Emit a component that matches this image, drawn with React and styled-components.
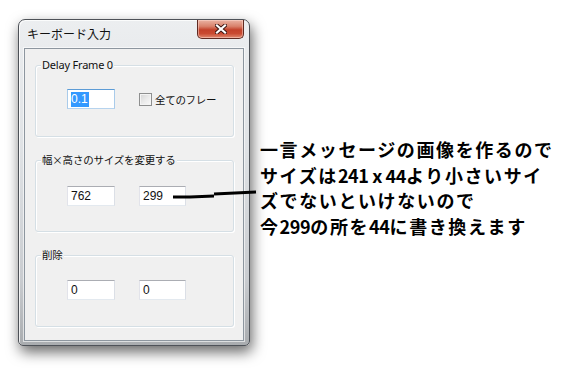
import React from "react";
import styled, { createGlobalStyle } from "styled-components";

const GlobalStyle = createGlobalStyle`
  html, body { margin: 0; padding: 0; background: #ffffff; }
  * { box-sizing: border-box; }
`;

const Page = styled.div`
  position: relative;
  width: 564px;
  height: 371px;
  display: flex;
  align-items: flex-start;
  padding: 19px 0 0 18px;
  background: #ffffff;
  overflow: hidden;
`;

const Window = styled.div`
  width: 232px;
  height: 327px;
  flex: none;
  display: flex;
  flex-direction: column;
  padding: 0 5px 4px 5px;
  border: 1px solid #4e5258;
  border-radius: 7px 7px 5px 5px;
  background: linear-gradient(180deg, #eceef0 0%, #dfe2e5 40%, #c9ccd0 80%, #a9acaf 100%);
  box-shadow: 2px 6px 14px rgba(0, 0, 0, 0.6), inset 1px 1px 0 rgba(255, 255, 255, 0.8);
`;

const TitleBar = styled.div`
  height: 28px;
  display: flex;
  justify-content: space-between;
  align-items: flex-start;
`;

const Title = styled.span`
  margin: 6px 0 0 3px;
  font-family: "Noto Sans CJK JP", sans-serif;
  font-size: 12px;
  line-height: 16px;
  color: #111;
`;

const CloseButton = styled.div`
  width: 47px;
  height: 19px;
  display: flex;
  align-items: center;
  justify-content: center;
  border: 1px solid #5f2a22;
  border-top: none;
  border-radius: 0 0 5px 5px;
  background: linear-gradient(180deg, #eab3a3 0%, #d9826c 35%, #c3412a 55%, #c94a31 75%, #e0896f 100%);
  box-shadow: inset 0 0 0 1px rgba(255, 220, 210, 0.5);
`;

const Client = styled.div`
  height: 293px;
  display: flex;
  flex-direction: column;
  gap: 23px;
  padding: 16px 9px 13px 10px;
  background: #f0f0f0;
  border: 1px solid #8d969f;
  box-shadow: 0 0 0 1px rgba(255, 255, 255, 0.6);
`;

const Group = styled.div`
  position: relative;
  height: 72px;
  flex: none;
  display: flex;
  align-self: stretch;
  align-items: flex-start;
  gap: 24px;
  padding: ${(p) => p.$top}px 0 0 31px;
  border: 1px solid #d5dfe5;
  border-radius: 3px;
  box-shadow: inset 1px 1px 0 #ffffff, 1px 1px 0 #ffffff;
`;

const GroupLabel = styled.span`
  position: absolute;
  left: 5px;
  top: -9px;
  padding: 0 1px;
  background: #f0f0f0;
  font-family: ${(p) => (p.$latin ? '"Noto Sans", sans-serif' : '"Noto Sans CJK JP", sans-serif')};
  font-size: ${(p) => (p.$latin ? "11px" : "10.5px")};
  letter-spacing: ${(p) => (p.$latin ? "-0.2px" : "-0.2px")};
  line-height: 16px;
  color: #111;
  white-space: nowrap;
`;

const TextBox = styled.div`
  width: ${(p) => p.$w || 48}px;
  height: 20px;
  flex: none;
  display: flex;
  align-items: center;
  padding-left: 3px;
  background: #ffffff;
  border: 1px solid;
  border-color: ${(p) =>
    p.$focused ? "#5d9cd6 #a9cbea #b6d3ee #a9cbea" : "#abadb3 #dbdfe6 #e3e9ef #e2e3ea"};
  font-family: "Liberation Sans", "Noto Sans", sans-serif;
  font-size: 12px;
  color: #111;
`;

const Selected = styled.span`
  background: #3399ff;
  color: #ffffff;
  line-height: 15px;
  padding: 0 1px 0 0;
`;

const CheckRow = styled.div`
  display: flex;
  align-items: center;
  gap: 3px;
  height: 20px;
  font-family: "Noto Sans CJK JP", sans-serif;
  font-size: 10.5px;
  letter-spacing: -0.3px;
  color: #111;
`;

const CheckBox = styled.span`
  width: 13px;
  height: 13px;
  flex: none;
  border: 1px solid #8e8f8f;
  background: linear-gradient(135deg, #d4d4d4 0%, #eaeaea 50%, #fafafa 100%);
  box-shadow: inset 0 0 0 1px #f4f4f4;
`;

const Annotation = styled.div`
  margin: 118px 0 0 10px;
  font-family: "Noto Sans CJK JP", sans-serif;
  font-weight: 700;
  font-size: 18px;
  line-height: 25.5px;
  letter-spacing: 1.6px;
  color: #000;
  white-space: nowrap;
`;

const Num = styled.span`
  letter-spacing: -0.4px;
`;

const Connector = styled.svg`
  position: absolute;
  left: 0;
  top: 0;
  pointer-events: none;
`;

export default function App() {
  return (
    <>
      <GlobalStyle />
      <Page>
        <Window>
          <TitleBar>
            <Title>キーボード入力</Title>
            <CloseButton>
              <svg width="12" height="10" viewBox="0 0 12 10">
                <path d="M2 1.5 L10 8.5 M10 1.5 L2 8.5" stroke="#3a1410" strokeWidth="4" strokeLinecap="square" />
                <path d="M2 1.5 L10 8.5 M10 1.5 L2 8.5" stroke="#ffffff" strokeWidth="2.2" strokeLinecap="square" />
              </svg>
            </CloseButton>
          </TitleBar>
          <Client>
            <Group $top={23}>
              <GroupLabel $latin>Delay Frame 0</GroupLabel>
              <TextBox $focused>
                <Selected>0.1</Selected>
              </TextBox>
              <CheckRow>
                <CheckBox />
                全てのフレー
              </CheckRow>
            </Group>
            <Group $top={25}>
              <GroupLabel>幅×高さのサイズを変更する</GroupLabel>
              <TextBox>762</TextBox>
              <TextBox $w={47}>299</TextBox>
            </Group>
            <Group $top={24}>
              <GroupLabel>削除</GroupLabel>
              <TextBox>0</TextBox>
              <TextBox $w={47}>0</TextBox>
            </Group>
          </Client>
        </Window>
        <Annotation>
          一言メッセージの画像を作るので
          <br />
          サイズは<Num>241 x 44</Num>より小さいサイ
          <br />
          ズでないといけないので
          <br />
          今<Num>299</Num>の所を<Num>44</Num>に書き換えます
        </Annotation>
        <Connector width="564" height="371" viewBox="0 0 564 371">
          <path d="M173 197 L190 197 L214 196" stroke="#000" strokeWidth="3" fill="none" />
          <path d="M214 194 L256 192" stroke="#000" strokeWidth="3" fill="none" />
        </Connector>
      </Page>
    </>
  );
}
